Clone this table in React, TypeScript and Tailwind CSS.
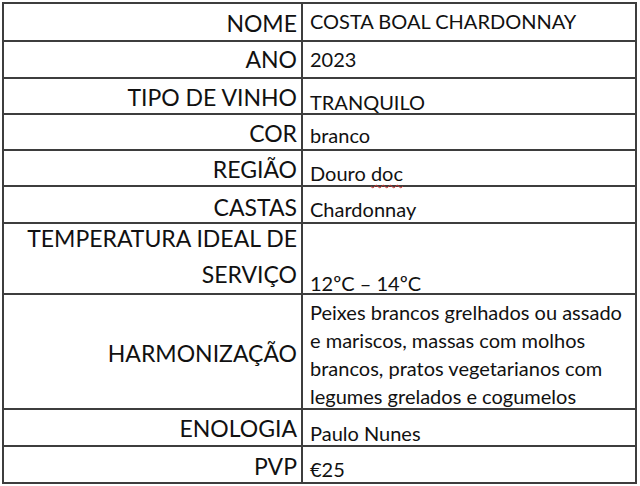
type Row = {
  label: string
  value: string
  h: string
  lpb: string
  rpb: string
}

const rows: Row[] = [
  { label: 'NOME', value: 'COSTA BOAL CHARDONNAY', h: 'h-[38px]', lpb: 'pb-[5px]', rpb: 'pb-[9px]' },
  { label: 'ANO', value: '2023', h: 'h-[37px]', lpb: 'pb-[6px]', rpb: 'pb-[8px]' },
  { label: 'TIPO DE VINHO', value: 'TRANQUILO', h: 'h-[36px]', lpb: 'pb-[4px]', rpb: 'pb-[1px]' },
  { label: 'COR', value: 'branco', h: 'h-[36px]', lpb: 'pb-[4px]', rpb: 'pb-[4px]' },
  { label: 'REGIÃO', value: 'Douro doc', h: 'h-[36px]', lpb: 'pb-[4px]', rpb: 'pb-[2px]' },
  { label: 'CASTAS', value: 'Chardonnay', h: 'h-[37px]', lpb: 'pb-[3px]', rpb: 'pb-[3px]' },
]

const tail: Row[] = [
  { label: 'ENOLOGIA', value: 'Paulo Nunes', h: 'h-[37px]', lpb: 'pb-[5px]', rpb: 'pb-[2px]' },
  { label: 'PVP', value: '€25', h: 'h-[35px]', lpb: 'pb-[4px]', rpb: 'pb-[3px]' },
]

const label = "text-[23px] leading-none text-[#111] font-['Lato',sans-serif]"
const value = "text-[20px] leading-none text-[#111] font-['Lato',sans-serif]"
const para = "text-[20px] leading-[28px] text-[#111] font-['Lato',sans-serif]"

function SimpleRow({ row, last }: { row: Row; last?: boolean }) {
  return (
    <div className={`flex ${row.h} ${last ? '' : 'border-b-2 border-[#3d3d3d]'}`}>
      <div className={`w-[299px] shrink-0 border-r-2 border-[#3d3d3d] flex items-end justify-end pr-[4px] ${row.lpb}`}>
        <span className={label}>{row.label}</span>
      </div>
      <div className={`flex-1 flex items-end pl-[7px] ${row.rpb}`}>
        {row.value === 'Douro doc' ? (
          <span className={value}>
            Douro{' '}
            <span className="underline decoration-wavy decoration-[#d0312d] decoration-1 underline-offset-[3px]">doc</span>
          </span>
        ) : (
          <span className={value}>{row.value}</span>
        )}
      </div>
    </div>
  )
}

export default function App() {
  return (
    <div className="w-[640px] h-[486px] bg-white pt-[2px] pl-[2px]">
      <div className="w-[635px] h-[482px] border-2 border-[#3d3d3d] flex flex-col">
        {rows.map((r) => (
          <SimpleRow key={r.label} row={r} />
        ))}

        {/* temperatura */}
        <div className="flex h-[71px] border-b-2 border-[#3d3d3d]">
          <div className="w-[299px] shrink-0 border-r-2 border-[#3d3d3d] flex flex-col items-end pr-[4px] pt-[3px]">
            <span className={label}>TEMPERATURA IDEAL DE</span>
            <span className={`${label} mt-[13px]`}>SERVIÇO</span>
          </div>
          <div className="flex-1 flex items-end pl-[7px]">
            <span className={value}>12ºC – 14ºC</span>
          </div>
        </div>

        {/* harmonizacao */}
        <div className="flex h-[115px] border-b-2 border-[#3d3d3d]">
          <div className="w-[299px] shrink-0 border-r-2 border-[#3d3d3d] flex justify-end pr-[4px] pt-[47px]">
            <span className={label}>HARMONIZAÇÃO</span>
          </div>
          <div className="flex-1 flex flex-col pl-[7px] pt-[3px]">
            <span className={para}>Peixes brancos grelhados ou assado</span>
            <span className={para}>e mariscos, massas com molhos</span>
            <span className={para}>brancos, pratos vegetarianos com</span>
            <span className={para}>legumes grelados e cogumelos</span>
          </div>
        </div>

        {tail.map((r, i) => (
          <SimpleRow key={r.label} row={r} last={i === tail.length - 1} />
        ))}
      </div>
    </div>
  )
}
